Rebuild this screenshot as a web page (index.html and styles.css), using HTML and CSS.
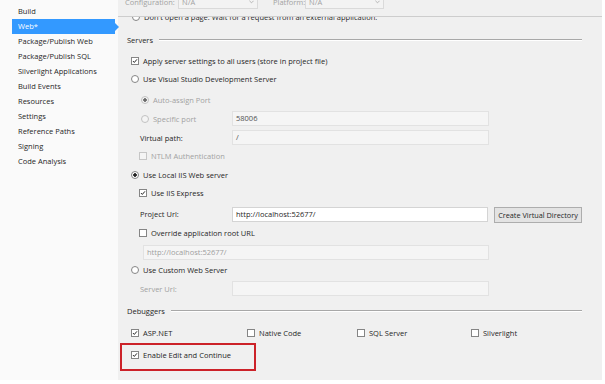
FILE: index.html
```html
<!DOCTYPE html>
<html lang="en">

<head>
    <meta charset="UTF-8">
    <meta name="viewport" content="width=device-width, initial-scale=1.0">
    <title>Web properties</title>
    <link rel="stylesheet" href="styles.css">
</head>

<body>
    <div class="window">
        <nav class="sidebar">
            <div class="nav-item">Build</div>
            <div class="nav-item active">Web*</div>
            <div class="nav-item">Package/Publish Web</div>
            <div class="nav-item">Package/Publish SQL</div>
            <div class="nav-item">Silverlight Applications</div>
            <div class="nav-item">Build Events</div>
            <div class="nav-item">Resources</div>
            <div class="nav-item">Settings</div>
            <div class="nav-item">Reference Paths</div>
            <div class="nav-item">Signing</div>
            <div class="nav-item">Code Analysis</div>
        </nav>

        <main class="panel">
            <div class="topbar">
                <span class="top-label cfg-label">Configuration:</span>
                <span class="select cfg">N/A
                    <svg class="caret" viewBox="0 0 6 4"><path d="M0.5 0.5 L3 3 L5.5 0.5" fill="none" stroke="#9a9a9a" stroke-width="0.8"/></svg>
                </span>
                <span class="top-label plat-label">Platform:</span>
                <span class="select plat">N/A
                    <svg class="caret" viewBox="0 0 6 4"><path d="M0.5 0.5 L3 3 L5.5 0.5" fill="none" stroke="#9a9a9a" stroke-width="0.8"/></svg>
                </span>
            </div>

            <div class="scroll">
                <div class="row clipped"><span class="radio"></span>Don't open a page. Wait for a request from an external application.</div>

                <div class="group servers">Servers</div>

                <div class="row l1 mt7"><span class="cb on"><svg viewBox="0 0 8 8"><path d="M1.3 4.1 L3.1 5.9 L6.6 1.8" fill="none" stroke="#1e1e1e" stroke-width="1.3"/></svg></span>Apply server settings to all users (store in project file)</div>
                <div class="row l1 mt4"><span class="radio"></span>Use Visual Studio Development Server</div>
                <div class="row l3 mt7 off"><span class="radio dis on"></span>Auto-assign Port</div>

                <div class="field mt4">
                    <div class="l3 off cell"><span class="radio dis"></span>Specific port</div>
                    <div class="box dis dark">58006</div>
                </div>
                <div class="field mt5">
                    <div class="lbl">Virtual path:</div>
                    <div class="box dis dark">/</div>
                </div>

                <div class="row l2 mt5 off"><span class="cb dis"></span>NTLM Authentication</div>
                <div class="row l1 mt5"><span class="radio on"></span>Use Local IIS Web server</div>
                <div class="row l2 mt4"><span class="cb on"><svg viewBox="0 0 8 8"><path d="M1.3 4.1 L3.1 5.9 L6.6 1.8" fill="none" stroke="#1e1e1e" stroke-width="1.3"/></svg></span>Use IIS Express</div>

                <div class="field project mt5">
                    <div class="lbl">Project Url:</div>
                    <div class="box">http://localhost:52677/</div>
                    <div class="btn">Create Virtual Directory</div>
                </div>

                <div class="row l2 mt7"><span class="cb"></span>Override application root URL</div>
                <div class="row mt5">
                    <div class="box dis wide">http://localhost:52677/</div>
                </div>

                <div class="row l1 mt4"><span class="radio"></span>Use Custom Web Server</div>
                <div class="field mt4">
                    <div class="lbl off">Server Url:</div>
                    <div class="box dis"></div>
                </div>

                <div class="group debuggers">Debuggers</div>

                <div class="debug-row">
                    <div class="opt"><span class="cb on"><svg viewBox="0 0 8 8"><path d="M1.3 4.1 L3.1 5.9 L6.6 1.8" fill="none" stroke="#1e1e1e" stroke-width="1.3"/></svg></span>ASP.NET</div>
                    <div class="opt"><span class="cb"></span>Native Code</div>
                    <div class="opt"><span class="cb"></span>SQL Server</div>
                    <div class="opt"><span class="cb"></span>Silverlight</div>
                </div>

                <div class="highlight">
                    <div class="row"><span class="cb on"><svg viewBox="0 0 8 8"><path d="M1.3 4.1 L3.1 5.9 L6.6 1.8" fill="none" stroke="#1e1e1e" stroke-width="1.3"/></svg></span>Enable Edit and Continue</div>
                </div>
            </div>
        </main>
    </div>
</body>

</html>
```

FILE: styles.css
```css
* {
    box-sizing: border-box;
}

body {
    margin: 0;
    background: #fff;
    font-family: "Open Sans", "Noto Sans", sans-serif;
    font-size: 7.5px;
    color: #262626;
}

.window {
    display: flex;
    width: 602px;
    height: 380px;
}

/* left list */
.sidebar {
    width: 118px;
    background: #fafafa;
    padding-top: 4px;
}

.nav-item {
    height: 15px;
    line-height: 15px;
    padding-left: 18px;
    white-space: nowrap;
}

.nav-item.active {
    position: relative;
    margin-left: 12px;
    width: 103px;
    padding-left: 6px;
    background: #3399ff;
    color: #fff;
}

.nav-item.active::after {
    content: "";
    position: absolute;
    right: -4px;
    top: 3.5px;
    border-left: 4px solid #3399ff;
    border-top: 4px solid transparent;
    border-bottom: 4px solid transparent;
}

/* right panel */
.panel {
    flex: 1;
    background: #f0f0f0;
    display: flex;
    flex-direction: column;
}

.topbar {
    height: 17px;
    border-bottom: 1px solid #cdcdcd;
    overflow: hidden;
    display: flex;
    align-items: flex-start;
    padding-left: 7px;
    color: #a3a3a3;
    flex-shrink: 0;
}

.topbar > span {
    margin-top: -5px;
    height: 14px;
    display: flex;
    align-items: center;
}

.cfg-label {
    width: 53px;
}

.plat-label {
    width: 32px;
    margin-left: 15px;
}

.select {
    border: 1px solid #dadada;
    background: #f3f3f3;
    padding-left: 3px;
    justify-content: space-between;
}

.select.cfg {
    width: 80px;
}

.select.plat {
    width: 79px;
}

.caret {
    width: 5px;
    height: 4px;
    margin-right: 3px;
}

.scroll {
    flex: 1;
    overflow: hidden;
    padding-left: 9px;
}

.row {
    display: flex;
    align-items: center;
    height: 14px;
    white-space: nowrap;
}

.clipped {
    margin-top: -6px;
    height: 12px;
    padding-left: 5px;
}

.l1 {
    padding-left: 4px;
}

.l2 {
    padding-left: 12px;
}

.l3 {
    padding-left: 14px;
}

.mt4 {
    margin-top: 4px;
}

.mt5 {
    margin-top: 5px;
}

.mt7 {
    margin-top: 7px;
}

.off {
    color: #a2a2a2;
}

/* group header with rule */
.group {
    display: flex;
    align-items: center;
    height: 14px;
    margin-right: 20px;
}

.group::after {
    content: "";
    flex: 1;
    margin-left: 6px;
    border-top: 1px solid #a8a8a8;
    border-bottom: 1px solid #fff;
}

.group.servers {
    margin-top: 10px;
}

.group.debuggers {
    margin-top: 9px;
}

/* controls */
.cb,
.radio {
    width: 8px;
    height: 8px;
    border: 1px solid #858585;
    background: #fff;
    margin-right: 4px;
    flex-shrink: 0;
    display: flex;
}

.cb svg {
    width: 6px;
    height: 6px;
}

.cb.dis {
    border-color: #c6c6c6;
    background: #f4f4f4;
}

.radio {
    border-radius: 50%;
}

.radio.on {
    background: radial-gradient(circle, #222 0 1.5px, #fff 2px);
}

.radio.dis {
    border-color: #c2c2c2;
    background: #f4f4f4;
}

.radio.dis.on {
    background: radial-gradient(circle, #6a6a6a 0 1.5px, #f4f4f4 2px);
}

.field {
    display: grid;
    grid-template-columns: 105px 257px;
    align-items: center;
    height: 14px;
    white-space: nowrap;
}

.field.project {
    grid-template-columns: 105px 256px 94px;
}

.cell {
    display: flex;
    align-items: center;
}

.lbl {
    padding-left: 13px;
}

.box {
    height: 15px;
    line-height: 13px;
    border: 1px solid #d4d4d4;
    background: #fff;
    padding-left: 3px;
}

.box.dis {
    background: #f5f5f5;
    border-color: #e2e2e2;
    color: #9e9e9e;
}

.box.dark {
    color: #505050;
}

.box.wide {
    margin-left: 16px;
    width: 346px;
}

.btn {
    height: 16px;
    margin: 2px 0 0 6px;
    border: 1px solid #adadad;
    background: #e3e3e3;
    text-align: center;
    line-height: 14px;
    font-size: 7.3px;
}

.debug-row {
    display: grid;
    grid-template-columns: 116px 110px 114px auto;
    height: 14px;
    margin-top: 8px;
    padding-left: 4px;
    white-space: nowrap;
}

.opt {
    display: flex;
    align-items: center;
}

/* red annotation box */
.highlight {
    margin-top: 3px;
    margin-left: -7px;
    width: 136px;
    height: 28px;
    border: 2px solid #cc2229;
    padding: 3px 0 0 9px;
}
```
